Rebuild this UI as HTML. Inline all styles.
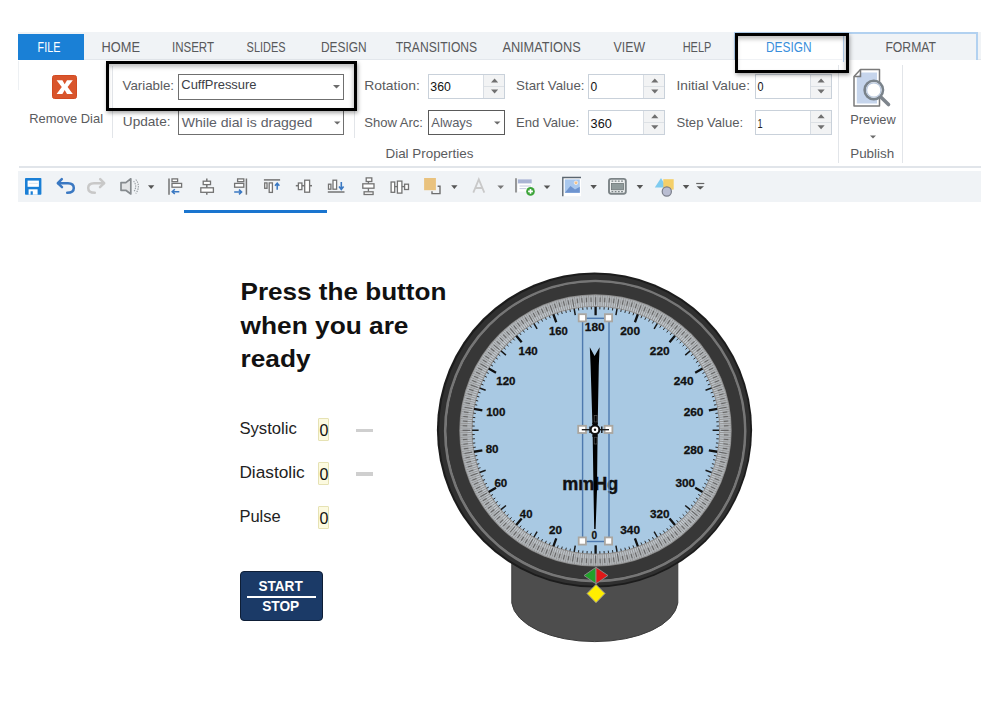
<!DOCTYPE html>
<html><head><meta charset="utf-8">
<style>
*{margin:0;padding:0;box-sizing:border-box}
html,body{width:999px;height:712px;overflow:hidden;background:#fff;font-family:"Liberation Sans",sans-serif;}
.a{position:absolute}
.inp{position:absolute;background:#fff;border:1px solid #6f6f6f}
.spin{position:absolute;background:#fff;border:1px solid #c9d1da}
.spin .sb{position:absolute;right:0;top:0;bottom:0;width:21px;background:#f2f3f4;border-left:1px solid #d8dde3}
.spin .sb:before{content:"";position:absolute;left:0;right:0;top:11px;height:1px;background:#dde1e5}
.sep{position:absolute;width:1px;background:#e2e5e9}
</style></head><body>
<!-- tab bar -->
<div class="a" style="left:18px;top:32px;width:963px;height:28px;background:#f0f3f6;border-bottom:1px solid #e3e7ec"></div>
<div class="a" style="left:17.8px;top:34px;width:66.2px;height:25.8px;background:#1a80d6"></div>
<!-- contextual tabs -->
<div class="a" style="left:734px;top:32px;width:243.5px;height:28px;border:2px solid #b2d1f0;border-bottom:none;background:#f0f3f6"></div>
<div class="a" style="left:735.5px;top:33.5px;width:108px;height:28px;background:#fff;border-right:1.5px solid #b4d0ef"></div>

<!-- ribbon bottom line -->
<div class="a" style="left:18px;top:61px;width:1px;height:29px;background:#edf0f3"></div>
<div class="a" style="left:736px;top:59.3px;width:106px;height:1px;background:#f0f2f5"></div>
<div class="a" style="left:19px;top:166.3px;width:962px;height:1.4px;background:#e1e5ea"></div>

<!-- remove dial -->
<div class="a" style="left:52.3px;top:74.8px;width:24.6px;height:24.6px;background:#d9552c;border:1px solid #d24a22;border-radius:2.5px"></div>
<svg class="a" style="left:0;top:0" width="100" height="110"><path d="M56.6 80.3 L62.4 80.3 L64.7 84.2 L67 80.3 L72.8 80.3 L67.6 87.1 L72.8 93.9 L67 93.9 L64.7 90 L62.4 93.9 L56.6 93.9 L61.8 87.1 Z" fill="#fff"/></svg>
<div class="sep" style="left:112px;top:66px;height:72px"></div>

<!-- variable / update -->
<div class="inp" style="left:178px;top:73.5px;width:166px;height:26px"></div>
<div class="inp" style="left:178px;top:109.5px;width:166px;height:25px"></div>
<div class="sep" style="left:354px;top:66px;height:72px"></div>

<!-- rotation / show arc -->
<div class="spin" style="left:428px;top:73.8px;width:77px;height:25.5px"><div class="sb"></div></div>
<div class="inp" style="left:428px;top:109.5px;width:77px;height:25.5px;border-color:#5a5a5a"></div>

<div class="spin" style="left:588px;top:73.8px;width:77px;height:25.5px"><div class="sb"></div></div>
<div class="spin" style="left:588px;top:109.6px;width:77px;height:25.2px"><div class="sb"></div></div>

<div class="spin" style="left:754.6px;top:73.8px;width:77px;height:25.2px"><div class="sb"></div></div>
<div class="spin" style="left:754.6px;top:109.6px;width:77px;height:25.2px"><div class="sb"></div></div>
<svg class="a" style="left:0;top:0" width="999" height="170">
<path d="M491.0 82.4 h7.2 l-3.6 -4z M491.0 89.4 h7.2 l-3.6 4z M651.2 82.4 h7.2 l-3.6 -4z M651.2 89.4 h7.2 l-3.6 4z M651.2 118.2 h7.2 l-3.6 -4z M651.2 125.2 h7.2 l-3.6 4z M817.5 82.4 h7.2 l-3.6 -4z M817.5 89.4 h7.2 l-3.6 4z M817.5 118.2 h7.2 l-3.6 -4z M817.5 125.2 h7.2 l-3.6 4z" fill="#707070"/>
<path d="M870 135.6 h6 l-3 3z" fill="#6b6b6b"/>
</svg>
<svg class="a" style="left:0;top:0" width="999" height="170">
<path d="M333 85 h7 l-3.5 3.5z M334 121.5 h6.5 l-3.25 3z M494 121.5 h6.5 l-3.25 3z" fill="#6b6b6b"/>
</svg>
<div class="sep" style="left:838px;top:65px;height:98px"></div>

<!-- preview icon -->
<svg class="a" style="left:0;top:0" width="999" height="170">
<path d="M860.5 69.5 H879.5 V106 H854 V76.5 Z" fill="#fff" stroke="#7a7a7a" stroke-width="1.5" stroke-linejoin="round"/>
<path d="M856.8 77.5 L861.5 72.5 H877 V103.5 H856.8 Z" fill="#c6d5ec"/>
<path d="M854 76.5 H860.5 V69.5" fill="none" stroke="#7a7a7a" stroke-width="1.5"/>
<path d="M880.8 97 L888.5 104.5" stroke="#7e858c" stroke-width="3.6" stroke-linecap="round"/>
<circle cx="873.8" cy="90" r="9.2" fill="#fff" stroke="#7a838b" stroke-width="2.6"/>
<circle cx="873.8" cy="90" r="7.2" fill="none" stroke="#b7c6dc" stroke-width="1.2"/>
</svg>
<div class="sep" style="left:902px;top:65px;height:98px"></div>

<!-- toolbar -->
<div class="a" style="left:17.5px;top:171px;width:963.5px;height:31px;background:#f0f3f6"></div>
<svg class="a" style="left:0;top:0" width="999" height="210">
<!-- save -->
<rect x="25" y="178" width="16.4" height="16.7" rx="0.8" fill="#1a7fd6"/>
<rect x="27.6" y="180.6" width="11.3" height="6.2" fill="#fff"/>
<rect x="28.8" y="182.8" width="9" height="1" fill="#d8e3ee"/>
<rect x="28.6" y="189.3" width="9" height="5.4" fill="#fff"/>
<rect x="30.6" y="191.3" width="2.2" height="3.4" fill="#1a7fd6"/>
<!-- undo -->
<path d="M58.2 183.2 H68 C72.3 183.2 73.8 185.6 73.8 188 C73.8 190.8 71.8 192.8 67.2 192.8" fill="none" stroke="#3a78c2" stroke-width="2.5" stroke-linecap="round"/>
<path d="M61.8 179.2 L57.8 183.2 L62 187.2" fill="none" stroke="#3a78c2" stroke-width="2.5" stroke-linecap="round" stroke-linejoin="round"/>
<!-- redo -->
<path d="M103.8 183.2 H94 C89.7 183.2 88.2 185.6 88.2 188 C88.2 190.8 90.2 192.8 94.8 192.8" fill="none" stroke="#c8c8c8" stroke-width="2.5" stroke-linecap="round"/>
<path d="M100.2 179.2 L104.2 183.2 L100 187.2" fill="none" stroke="#c8c8c8" stroke-width="2.5" stroke-linecap="round" stroke-linejoin="round"/>
<!-- speaker -->
<path d="M121 182.6 H125.8 L130.8 178.8 V194 L125.8 190.3 H121 Z" fill="#e2e4e6" stroke="#858a8e" stroke-width="1.7" stroke-linejoin="round"/>
<path d="M133.6 181 Q137.8 186.4 133.6 192 M135.8 179.5 Q141 186.4 135.8 193.5" fill="none" stroke="#9aa0a5" stroke-width="1.2" stroke-dasharray="1.4 1"/>
<path d="M148 185.3 h6.3 l-3.15 3.6z" fill="#555"/>
<!-- align left -->
<path d="M169 178.5 V194.7" stroke="#737373" stroke-width="1.5"/>
<rect x="172" y="178.9" width="5.6" height="2.8" fill="#fff" stroke="#737373" stroke-width="1.3"/>
<rect x="172" y="183.4" width="9.6" height="3.8" fill="#fff" stroke="#737373" stroke-width="1.3"/>
<path d="M179.3 191.7 H172.5 M174.8 189.3 L172.2 191.7 L174.8 194" fill="none" stroke="#3a78c2" stroke-width="1.5"/>
<!-- align center -->
<path d="M206.8 178.5 V194.7" stroke="#737373" stroke-width="1.5"/>
<rect x="203.2" y="181.2" width="7.3" height="3.4" fill="#fff" stroke="#737373" stroke-width="1.3"/>
<rect x="200.8" y="187.8" width="12.6" height="4.5" fill="#fff" stroke="#737373" stroke-width="1.3"/>
<!-- align right -->
<path d="M246.4 178.5 V194.7" stroke="#737373" stroke-width="1.5"/>
<rect x="237.6" y="178.9" width="6.2" height="2.8" fill="#fff" stroke="#737373" stroke-width="1.3"/>
<rect x="234.6" y="183.4" width="9.2" height="3.8" fill="#fff" stroke="#737373" stroke-width="1.3"/>
<path d="M234.2 192 H241.5 M239 189.6 L241.6 192 L239 194.4" fill="none" stroke="#3a78c2" stroke-width="1.5"/>
<!-- align top -->
<path d="M263.9 179.9 H280.1" stroke="#737373" stroke-width="1.5"/>
<rect x="264.7" y="182.9" width="2.3" height="5.4" fill="#fff" stroke="#737373" stroke-width="1.3"/>
<rect x="269.2" y="182.9" width="3.2" height="9.5" fill="#fff" stroke="#737373" stroke-width="1.3"/>
<path d="M277.2 189.8 V183.6 M275 185.8 L277.2 183.2 L279.4 185.8" fill="none" stroke="#3a78c2" stroke-width="1.5"/>
<!-- align middle -->
<path d="M295.8 185.7 H312" stroke="#737373" stroke-width="1.5"/>
<rect x="298.4" y="183" width="3.5" height="6.6" fill="#fff" stroke="#737373" stroke-width="1.3"/>
<rect x="304.7" y="180.2" width="4.9" height="12" fill="#fff" stroke="#737373" stroke-width="1.3"/>
<!-- align bottom -->
<path d="M327.8 192 H344.5" stroke="#737373" stroke-width="1.5"/>
<rect x="328.5" y="184.2" width="2.4" height="5" fill="#fff" stroke="#737373" stroke-width="1.3"/>
<rect x="333" y="180.2" width="3.6" height="9" fill="#fff" stroke="#737373" stroke-width="1.3"/>
<path d="M341.3 182.1 V189 M339 186.6 L341.3 189.4 L343.6 186.6" fill="none" stroke="#3a78c2" stroke-width="1.6"/>
<!-- distribute vertical -->
<path d="M368.4 181.7 V191.6" stroke="#737373" stroke-width="1.3"/>
<rect x="366.2" y="177.9" width="5.6" height="3.6" fill="#fff" stroke="#737373" stroke-width="1.3"/>
<rect x="362.8" y="183.8" width="11.2" height="4.4" fill="#fff" stroke="#737373" stroke-width="1.3"/>
<rect x="364.1" y="191.8" width="9" height="2.7" fill="#fff" stroke="#737373" stroke-width="1.3"/>
<!-- distribute horizontal -->
<path d="M394.9 186.6 H404.3" stroke="#737373" stroke-width="1.3"/>
<rect x="391.1" y="182" width="3.6" height="10.3" fill="#fff" stroke="#737373" stroke-width="1.3"/>
<rect x="397.4" y="181.1" width="4.5" height="12" fill="#fff" stroke="#737373" stroke-width="1.3"/>
<rect x="404.6" y="184.2" width="3.9" height="5.3" fill="#fff" stroke="#737373" stroke-width="1.3"/>
<!-- fill color -->
<rect x="424.1" y="178" width="11.8" height="12.2" fill="#e9c27e"/>
<path d="M437.6 186.3 H440 V193.6 H432 V191.2" fill="none" stroke="#6e6e6e" stroke-width="1.4"/>
<path d="M451.2 185.3 h6.3 l-3.15 3.6z" fill="#555"/>
<!-- A -->
<path d="M473.3 192.6 L478.8 179.4 L484.3 192.6 M475.3 188 H482.3" fill="none" stroke="#c9c9c9" stroke-width="1.8"/>
<path d="M497.4 185.4 h6.6 l-3.3 3.6z" fill="#777"/>
<!-- insert -->
<path d="M516 178.2 V192.6" stroke="#7a7a7a" stroke-width="1.5"/>
<rect x="517.9" y="179.4" width="13.8" height="4.2" fill="#a9b4d4"/>
<rect x="517.9" y="183.6" width="13.8" height="8" fill="#fff"/>
<path d="M519.5 186 H531 M519.5 188.6 H526" stroke="#c4cbe0" stroke-width="1"/>
<circle cx="530.5" cy="191.4" r="4.3" fill="#3da43a"/>
<path d="M530.5 189 V193.8 M528.1 191.4 H532.9" stroke="#fff" stroke-width="1.6"/>
<path d="M543.7 185.4 h6.6 l-3.3 3.6z" fill="#555"/>
<!-- image -->
<rect x="562.5" y="177.2" width="18.5" height="19" fill="#fff"/>
<path d="M562.8 196.2 V177.5 H581" fill="none" stroke="#5b6670" stroke-width="1.4"/>
<rect x="564.8" y="179.4" width="15" height="13.4" fill="#a9c8ee"/>
<path d="M564.8 192.8 L570.5 186 L575 189.5 L579.8 186.8 V192.8 Z" fill="#6e94cf"/>
<circle cx="576" cy="182.8" r="1.8" fill="#f3c28a" stroke="#fff" stroke-width="0.6"/>
<path d="M590.4 185 h6.5 l-3.25 3.9z" fill="#555"/>
<!-- film -->
<rect x="609" y="178.9" width="16.8" height="14.9" rx="2.2" fill="#eef0f1" stroke="#7b8386" stroke-width="1.9"/>
<rect x="611.4" y="183.4" width="12" height="6.4" fill="#8f9a9b" stroke="#6f7779" stroke-width="0.8"/>
<path d="M611.5 181.1 H623.5 M611.5 191.7 H623.5" stroke="#7b8386" stroke-width="1.3" stroke-dasharray="1.8 1.4"/>
<path d="M636.6 185 h6.5 l-3.25 3.9z" fill="#555"/>
<!-- shapes -->
<path d="M654.8 187.6 L661 177.9 L666.5 187.6 Z" fill="#7fcbef"/>
<rect x="663.3" y="179.2" width="10.4" height="10.4" fill="#f4cf69"/>
<circle cx="666.8" cy="191.5" r="4.6" fill="#b9bdd2" stroke="#7a7e8a" stroke-width="1.2"/>
<path d="M682.8 185 h6.5 l-3.25 3.9z" fill="#555"/>
<path d="M696.2 183.5 H704.3" stroke="#666" stroke-width="1.2"/>
<path d="M696.6 186.2 h7.4 l-3.7 3.4z" fill="#555"/>
</svg>

<div class="a" style="left:184px;top:210.3px;width:143px;height:2.7px;background:#1a75cf"></div>

<!-- left content shapes -->
<div class="a" style="left:318px;top:418px;width:11px;height:23px;background:#fcfae0;border:1px solid #e6e2b4;border-radius:1px"></div>
<div class="a" style="left:318px;top:462px;width:11px;height:23px;background:#fcfae0;border:1px solid #e6e2b4;border-radius:1px"></div>
<div class="a" style="left:318px;top:506px;width:11px;height:23px;background:#fcfae0;border:1px solid #e6e2b4;border-radius:1px"></div>
<div class="a" style="left:356.4px;top:428.5px;width:16.5px;height:3.3px;background:#cfcfcf"></div>
<div class="a" style="left:356.4px;top:472.3px;width:16.5px;height:3.3px;background:#cfcfcf"></div>
<div class="a" style="left:239.7px;top:570.8px;width:83.3px;height:49.8px;background:#1b3a67;border:1px solid #0e1e36;border-radius:4px"></div>
<div class="a" style="left:247px;top:595.5px;width:69px;height:2px;background:#fff"></div>

<svg class="a" style="left:0;top:0" width="999" height="712"><path d="M511.8 560 L511.8 603 A83.2 41.5 0 0 0 677.8 603 L677.8 560" fill="#4d4d4d" stroke="#3c3c3c" stroke-width="1"/>
<circle cx="594.5" cy="430" r="157.6" fill="#1c1c1c"/>
<circle cx="594.7" cy="430.2" r="155.6" fill="#303030"/>
<circle cx="595.2" cy="431.1" r="149.9" fill="none" stroke="#767676" stroke-width="2.8"/>
<circle cx="595.3" cy="430.8" r="148.6" fill="#373737"/>
<circle cx="595.5" cy="430.4" r="136.2" fill="#8c8c8c"/>
<circle cx="595.5" cy="430.4" r="135.2" fill="#bfc6cc"/>
<path d="M595.60 306.95L595.60 294.95M597.75 306.97L597.96 294.97M599.91 307.03L600.33 295.03M602.06 307.12L602.69 295.14M604.21 307.25L605.05 295.28M606.36 307.42L607.40 295.47M608.50 307.63L609.75 295.69M610.64 307.87L612.10 295.96M612.77 308.15L614.44 296.27M614.90 308.47L616.78 296.62M617.03 308.82L619.11 297.01M619.15 309.22L621.44 297.44M621.26 309.65L623.75 297.91M623.36 310.11L626.06 298.42M625.45 310.62L628.36 298.97M627.54 311.15L630.64 299.56M629.61 311.73L632.92 300.20M631.68 312.34L635.19 300.87M633.73 312.99L637.44 301.58M635.78 313.67L639.68 302.33M637.81 314.39L641.91 303.12M639.82 315.15L644.12 303.94M641.83 315.94L646.32 304.81M643.82 316.76L648.50 305.71M645.79 317.62L650.67 306.66M647.75 318.51L652.82 307.64M649.69 319.44L654.96 308.65M651.62 320.40L657.07 309.71M653.53 321.39L659.17 310.80M655.43 322.42L661.24 311.93M657.30 323.48L663.30 313.09M659.16 324.58L665.34 314.29M660.99 325.70L667.35 315.52M662.81 326.86L669.34 316.79M664.60 328.05L671.31 318.10M666.38 329.27L673.26 319.44M668.13 330.52L675.19 320.81M669.86 331.80L677.09 322.21M671.57 333.11L678.96 323.65M673.26 334.45L680.81 325.12M674.92 335.82L682.63 326.63M676.56 337.22L684.43 328.16M678.17 338.65L686.20 329.73M679.76 340.10L687.94 331.32M681.32 341.58L689.66 332.95M682.86 343.09L691.34 334.61M684.37 344.63L693.00 336.29M685.85 346.19L694.63 338.01M687.30 347.78L696.22 339.75M688.73 349.39L697.79 341.52M690.13 351.03L699.32 343.32M691.50 352.69L700.83 345.14M692.84 354.38L702.30 346.99M694.15 356.09L703.74 348.86M695.43 357.82L705.14 350.76M696.68 359.57L706.51 352.69M697.90 361.35L707.85 354.64M699.09 363.14L709.16 356.61M700.25 364.96L710.43 358.60M701.37 366.79L711.66 360.61M702.47 368.65L712.86 362.65M703.53 370.52L714.02 364.71M704.56 372.42L715.15 366.78M705.55 374.33L716.24 368.88M706.51 376.26L717.30 370.99M707.44 378.20L718.31 373.13M708.33 380.16L719.29 375.28M709.19 382.13L720.24 377.45M710.01 384.12L721.14 379.63M710.80 386.13L722.01 381.83M711.56 388.14L722.83 384.04M712.28 390.17L723.62 386.27M712.96 392.22L724.37 388.51M713.61 394.27L725.08 390.76M714.22 396.34L725.75 393.03M714.80 398.41L726.39 395.31M715.33 400.50L726.98 397.59M715.84 402.59L727.53 399.89M716.30 404.69L728.04 402.20M716.73 406.80L728.51 404.51M717.13 408.92L728.94 406.84M717.48 411.05L729.33 409.17M717.80 413.18L729.68 411.51M718.08 415.31L729.99 413.85M718.32 417.45L730.26 416.20M718.53 419.59L730.48 418.55M718.70 421.74L730.67 420.90M718.83 423.89L730.81 423.26M718.92 426.04L730.92 425.62M718.98 428.20L730.98 427.99M719.00 430.35L731.00 430.35M718.98 432.50L730.98 432.71M718.92 434.66L730.92 435.08M718.83 436.81L730.81 437.44M718.70 438.96L730.67 439.80M718.53 441.11L730.48 442.15M718.32 443.25L730.26 444.50M718.08 445.39L729.99 446.85M717.80 447.52L729.68 449.19M717.48 449.65L729.33 451.53M717.13 451.78L728.94 453.86M716.73 453.90L728.51 456.19M716.30 456.01L728.04 458.50M715.84 458.11L727.53 460.81M715.33 460.20L726.98 463.11M714.80 462.29L726.39 465.39M714.22 464.36L725.75 467.67M713.61 466.43L725.08 469.94M712.96 468.48L724.37 472.19M712.28 470.53L723.62 474.43M711.56 472.56L722.83 476.66M710.80 474.57L722.01 478.87M710.01 476.58L721.14 481.07M709.19 478.57L720.24 483.25M708.33 480.54L719.29 485.42M707.44 482.50L718.31 487.57M706.51 484.44L717.30 489.71M705.55 486.37L716.24 491.82M704.56 488.28L715.15 493.92M703.53 490.18L714.02 495.99M702.47 492.05L712.86 498.05M701.37 493.91L711.66 500.09M700.25 495.74L710.43 502.10M699.09 497.56L709.16 504.09M697.90 499.35L707.85 506.06M696.68 501.13L706.51 508.01M695.43 502.88L705.14 509.94M694.15 504.61L703.74 511.84M692.84 506.32L702.30 513.71M691.50 508.01L700.83 515.56M690.13 509.67L699.32 517.38M688.73 511.31L697.79 519.18M687.30 512.92L696.22 520.95M685.85 514.51L694.63 522.69M684.37 516.07L693.00 524.41M682.86 517.61L691.34 526.09M681.32 519.12L689.66 527.75M679.76 520.60L687.94 529.38M678.17 522.05L686.20 530.97M676.56 523.48L684.43 532.54M674.92 524.88L682.63 534.07M673.26 526.25L680.81 535.58M671.57 527.59L678.96 537.05M669.86 528.90L677.09 538.49M668.13 530.18L675.19 539.89M666.38 531.43L673.26 541.26M664.60 532.65L671.31 542.60M662.81 533.84L669.34 543.91M660.99 535.00L667.35 545.18M659.16 536.12L665.34 546.41M657.30 537.22L663.30 547.61M655.43 538.28L661.24 548.77M653.53 539.31L659.17 549.90M651.62 540.30L657.07 550.99M649.69 541.26L654.96 552.05M647.75 542.19L652.82 553.06M645.79 543.08L650.67 554.04M643.82 543.94L648.50 554.99M641.83 544.76L646.32 555.89M639.82 545.55L644.12 556.76M637.81 546.31L641.91 557.58M635.78 547.03L639.68 558.37M633.73 547.71L637.44 559.12M631.68 548.36L635.19 559.83M629.61 548.97L632.92 560.50M627.54 549.55L630.64 561.14M625.45 550.08L628.36 561.73M623.36 550.59L626.06 562.28M621.26 551.05L623.75 562.79M619.15 551.48L621.44 563.26M617.03 551.88L619.11 563.69M614.90 552.23L616.78 564.08M612.77 552.55L614.44 564.43M610.64 552.83L612.10 564.74M608.50 553.07L609.75 565.01M606.36 553.28L607.40 565.23M604.21 553.45L605.05 565.42M602.06 553.58L602.69 565.56M599.91 553.67L600.33 565.67M597.75 553.73L597.96 565.73M595.60 553.75L595.60 565.75M593.45 553.73L593.24 565.73M591.29 553.67L590.87 565.67M589.14 553.58L588.51 565.56M586.99 553.45L586.15 565.42M584.84 553.28L583.80 565.23M582.70 553.07L581.45 565.01M580.56 552.83L579.10 564.74M578.43 552.55L576.76 564.43M576.30 552.23L574.42 564.08M574.17 551.88L572.09 563.69M572.05 551.48L569.76 563.26M569.94 551.05L567.45 562.79M567.84 550.59L565.14 562.28M565.75 550.08L562.84 561.73M563.66 549.55L560.56 561.14M561.59 548.97L558.28 560.50M559.52 548.36L556.01 559.83M557.47 547.71L553.76 559.12M555.42 547.03L551.52 558.37M553.39 546.31L549.29 557.58M551.38 545.55L547.08 556.76M549.37 544.76L544.88 555.89M547.38 543.94L542.70 554.99M545.41 543.08L540.53 554.04M543.45 542.19L538.38 553.06M541.51 541.26L536.24 552.05M539.58 540.30L534.13 550.99M537.67 539.31L532.03 549.90M535.77 538.28L529.96 548.77M533.90 537.22L527.90 547.61M532.04 536.12L525.86 546.41M530.21 535.00L523.85 545.18M528.39 533.84L521.86 543.91M526.60 532.65L519.89 542.60M524.82 531.43L517.94 541.26M523.07 530.18L516.01 539.89M521.34 528.90L514.11 538.49M519.63 527.59L512.24 537.05M517.94 526.25L510.39 535.58M516.28 524.88L508.57 534.07M514.64 523.48L506.77 532.54M513.03 522.05L505.00 530.97M511.44 520.60L503.26 529.38M509.88 519.12L501.54 527.75M508.34 517.61L499.86 526.09M506.83 516.07L498.20 524.41M505.35 514.51L496.57 522.69M503.90 512.92L494.98 520.95M502.47 511.31L493.41 519.18M501.07 509.67L491.88 517.38M499.70 508.01L490.37 515.56M498.36 506.32L488.90 513.71M497.05 504.61L487.46 511.84M495.77 502.88L486.06 509.94M494.52 501.13L484.69 508.01M493.30 499.35L483.35 506.06M492.11 497.56L482.04 504.09M490.95 495.74L480.77 502.10M489.83 493.91L479.54 500.09M488.73 492.05L478.34 498.05M487.67 490.18L477.18 495.99M486.64 488.28L476.05 493.92M485.65 486.37L474.96 491.82M484.69 484.44L473.90 489.71M483.76 482.50L472.89 487.57M482.87 480.54L471.91 485.42M482.01 478.57L470.96 483.25M481.19 476.58L470.06 481.07M480.40 474.57L469.19 478.87M479.64 472.56L468.37 476.66M478.92 470.53L467.58 474.43M478.24 468.48L466.83 472.19M477.59 466.43L466.12 469.94M476.98 464.36L465.45 467.67M476.40 462.29L464.81 465.39M475.87 460.20L464.22 463.11M475.36 458.11L463.67 460.81M474.90 456.01L463.16 458.50M474.47 453.90L462.69 456.19M474.07 451.78L462.26 453.86M473.72 449.65L461.87 451.53M473.40 447.52L461.52 449.19M473.12 445.39L461.21 446.85M472.88 443.25L460.94 444.50M472.67 441.11L460.72 442.15M472.50 438.96L460.53 439.80M472.37 436.81L460.39 437.44M472.28 434.66L460.28 435.08M472.22 432.50L460.22 432.71M472.20 430.35L460.20 430.35M472.22 428.20L460.22 427.99M472.28 426.04L460.28 425.62M472.37 423.89L460.39 423.26M472.50 421.74L460.53 420.90M472.67 419.59L460.72 418.55M472.88 417.45L460.94 416.20M473.12 415.31L461.21 413.85M473.40 413.18L461.52 411.51M473.72 411.05L461.87 409.17M474.07 408.92L462.26 406.84M474.47 406.80L462.69 404.51M474.90 404.69L463.16 402.20M475.36 402.59L463.67 399.89M475.87 400.50L464.22 397.59M476.40 398.41L464.81 395.31M476.98 396.34L465.45 393.03M477.59 394.27L466.12 390.76M478.24 392.22L466.83 388.51M478.92 390.17L467.58 386.27M479.64 388.14L468.37 384.04M480.40 386.13L469.19 381.83M481.19 384.12L470.06 379.63M482.01 382.13L470.96 377.45M482.87 380.16L471.91 375.28M483.76 378.20L472.89 373.13M484.69 376.26L473.90 370.99M485.65 374.33L474.96 368.88M486.64 372.42L476.05 366.78M487.67 370.52L477.18 364.71M488.73 368.65L478.34 362.65M489.83 366.79L479.54 360.61M490.95 364.96L480.77 358.60M492.11 363.14L482.04 356.61M493.30 361.35L483.35 354.64M494.52 359.57L484.69 352.69M495.77 357.82L486.06 350.76M497.05 356.09L487.46 348.86M498.36 354.38L488.90 346.99M499.70 352.69L490.37 345.14M501.07 351.03L491.88 343.32M502.47 349.39L493.41 341.52M503.90 347.78L494.98 339.75M505.35 346.19L496.57 338.01M506.83 344.63L498.20 336.29M508.34 343.09L499.86 334.61M509.88 341.58L501.54 332.95M511.44 340.10L503.26 331.32M513.03 338.65L505.00 329.73M514.64 337.22L506.77 328.16M516.28 335.82L508.57 326.63M517.94 334.45L510.39 325.12M519.63 333.11L512.24 323.65M521.34 331.80L514.11 322.21M523.07 330.52L516.01 320.81M524.82 329.27L517.94 319.44M526.60 328.05L519.89 318.10M528.39 326.86L521.86 316.79M530.21 325.70L523.85 315.52M532.04 324.58L525.86 314.29M533.90 323.48L527.90 313.09M535.77 322.42L529.96 311.93M537.67 321.39L532.03 310.80M539.58 320.40L534.13 309.71M541.51 319.44L536.24 308.65M543.45 318.51L538.38 307.64M545.41 317.62L540.53 306.66M547.38 316.76L542.70 305.71M549.37 315.94L544.88 304.81M551.38 315.15L547.08 303.94M553.39 314.39L549.29 303.12M555.42 313.67L551.52 302.33M557.47 312.99L553.76 301.58M559.52 312.34L556.01 300.87M561.59 311.73L558.28 300.20M563.66 311.15L560.56 299.56M565.75 310.62L562.84 298.97M567.84 310.11L565.14 298.42M569.94 309.65L567.45 297.91M572.05 309.22L569.76 297.44M574.17 308.82L572.09 297.01M576.30 308.47L574.42 296.62M578.43 308.15L576.76 296.27M580.56 307.87L579.10 295.96M582.70 307.63L581.45 295.69M584.84 307.42L583.80 295.47M586.99 307.25L586.15 295.28M589.14 307.12L588.51 295.14M591.29 307.03L590.87 295.03M593.45 306.97L593.24 294.97" stroke="#8e8e8e" stroke-width="0.9"/>
<path d="M596.72 302.35L596.78 294.96M598.95 302.39L599.14 295.00M601.18 302.47L601.51 295.08M603.41 302.59L603.87 295.20M605.64 302.74L606.22 295.37M607.87 302.94L608.58 295.57M610.09 303.17L610.93 295.82M612.31 303.45L613.27 296.11M614.52 303.76L615.61 296.44M616.73 304.11L617.95 296.81M618.93 304.49L620.27 297.22M621.12 304.92L622.59 297.67M623.30 305.38L624.91 298.16M625.48 305.89L627.21 298.69M627.65 306.43L629.50 299.26M629.81 307.01L631.78 299.87M631.95 307.62L634.06 300.53M634.09 308.27L636.32 301.22M636.21 308.96L638.56 301.95M638.33 309.69L640.80 302.72M640.43 310.46L643.02 303.52M642.51 311.26L645.22 304.37M644.58 312.09L647.42 305.26M646.64 312.97L649.59 306.18M648.68 313.87L651.75 307.14M650.71 314.82L653.89 308.14M652.71 315.80L656.02 309.18M654.70 316.81L658.12 310.25M656.68 317.86L660.21 311.36M658.63 318.94L662.27 312.50M660.56 320.06L664.32 313.69M662.48 321.21L666.35 314.90M664.37 322.40L668.35 316.15M666.25 323.61L670.33 317.44M668.10 324.86L672.29 318.76M669.93 326.14L674.23 320.12M671.74 327.46L676.14 321.51M673.52 328.80L678.03 322.93M675.28 330.18L679.89 324.38M677.02 331.58L681.72 325.87M678.73 333.02L683.54 327.39M680.42 334.48L685.32 328.94M682.08 335.98L687.07 330.52M683.71 337.50L688.80 332.13M685.32 339.05L690.50 333.78M686.90 340.63L692.17 335.45M688.45 342.24L693.82 337.15M689.97 343.87L695.43 338.88M691.47 345.53L697.01 340.63M692.93 347.22L698.56 342.41M694.37 348.93L700.08 344.23M695.77 350.67L701.57 346.06M697.15 352.43L703.02 347.92M698.49 354.21L704.44 349.81M699.81 356.02L705.83 351.72M701.09 357.85L707.19 353.66M702.34 359.70L708.51 355.62M703.55 361.58L709.80 357.60M704.74 363.47L711.05 359.60M705.89 365.39L712.26 361.63M707.01 367.32L713.45 363.68M708.09 369.27L714.59 365.74M709.14 371.25L715.70 367.83M710.15 373.24L716.77 369.93M711.13 375.24L717.81 372.06M712.08 377.27L718.81 374.20M712.98 379.31L719.77 376.36M713.86 381.37L720.69 378.53M714.69 383.44L721.58 380.73M715.49 385.52L722.43 382.93M716.26 387.62L723.23 385.15M716.99 389.74L724.00 387.39M717.68 391.86L724.73 389.63M718.33 394.00L725.42 391.89M718.94 396.14L726.08 394.17M719.52 398.30L726.69 396.45M720.06 400.47L727.26 398.74M720.57 402.65L727.79 401.04M721.03 404.83L728.28 403.36M721.46 407.02L728.73 405.68M721.84 409.22L729.14 408.00M722.19 411.43L729.51 410.34M722.50 413.64L729.84 412.68M722.78 415.86L730.13 415.02M723.01 418.08L730.38 417.37M723.21 420.31L730.58 419.73M723.36 422.54L730.75 422.08M723.48 424.77L730.87 424.44M723.56 427.00L730.95 426.81M723.60 429.23L730.99 429.17M723.60 431.47L730.99 431.53M723.56 433.70L730.95 433.89M723.48 435.93L730.87 436.26M723.36 438.16L730.75 438.62M723.21 440.39L730.58 440.97M723.01 442.62L730.38 443.33M722.78 444.84L730.13 445.68M722.50 447.06L729.84 448.02M722.19 449.27L729.51 450.36M721.84 451.48L729.14 452.70M721.46 453.68L728.73 455.02M721.03 455.87L728.28 457.34M720.57 458.05L727.79 459.66M720.06 460.23L727.26 461.96M719.52 462.40L726.69 464.25M718.94 464.56L726.08 466.53M718.33 466.70L725.42 468.81M717.68 468.84L724.73 471.07M716.99 470.96L724.00 473.31M716.26 473.08L723.23 475.55M715.49 475.18L722.43 477.77M714.69 477.26L721.58 479.97M713.86 479.33L720.69 482.17M712.98 481.39L719.77 484.34M712.08 483.43L718.81 486.50M711.13 485.46L717.81 488.64M710.15 487.46L716.77 490.77M709.14 489.45L715.70 492.87M708.09 491.43L714.59 494.96M707.01 493.38L713.45 497.02M705.89 495.31L712.26 499.07M704.74 497.23L711.05 501.10M703.55 499.12L709.80 503.10M702.34 501.00L708.51 505.08M701.09 502.85L707.19 507.04M699.81 504.68L705.83 508.98M698.49 506.49L704.44 510.89M697.15 508.27L703.02 512.78M695.77 510.03L701.57 514.64M694.37 511.77L700.08 516.47M692.93 513.48L698.56 518.29M691.47 515.17L697.01 520.07M689.97 516.83L695.43 521.82M688.45 518.46L693.82 523.55M686.90 520.07L692.17 525.25M685.32 521.65L690.50 526.92M683.71 523.20L688.80 528.57M682.08 524.72L687.07 530.18M680.42 526.22L685.32 531.76M678.73 527.68L683.54 533.31M677.02 529.12L681.72 534.83M675.28 530.52L679.89 536.32M673.52 531.90L678.03 537.77M671.74 533.24L676.14 539.19M669.93 534.56L674.23 540.58M668.10 535.84L672.29 541.94M666.25 537.09L670.33 543.26M664.37 538.30L668.35 544.55M662.48 539.49L666.35 545.80M660.56 540.64L664.32 547.01M658.63 541.76L662.27 548.20M656.68 542.84L660.21 549.34M654.70 543.89L658.12 550.45M652.71 544.90L656.02 551.52M650.71 545.88L653.89 552.56M648.68 546.83L651.75 553.56M646.64 547.73L649.59 554.52M644.58 548.61L647.42 555.44M642.51 549.44L645.22 556.33M640.43 550.24L643.02 557.18M638.33 551.01L640.80 557.98M636.21 551.74L638.56 558.75M634.09 552.43L636.32 559.48M631.95 553.08L634.06 560.17M629.81 553.69L631.78 560.83M627.65 554.27L629.50 561.44M625.48 554.81L627.21 562.01M623.30 555.32L624.91 562.54M621.12 555.78L622.59 563.03M618.93 556.21L620.27 563.48M616.73 556.59L617.95 563.89M614.52 556.94L615.61 564.26M612.31 557.25L613.27 564.59M610.09 557.53L610.93 564.88M607.87 557.76L608.58 565.13M605.64 557.96L606.22 565.33M603.41 558.11L603.87 565.50M601.18 558.23L601.51 565.62M598.95 558.31L599.14 565.70M596.72 558.35L596.78 565.74M594.48 558.35L594.42 565.74M592.25 558.31L592.06 565.70M590.02 558.23L589.69 565.62M587.79 558.11L587.33 565.50M585.56 557.96L584.98 565.33M583.33 557.76L582.62 565.13M581.11 557.53L580.27 564.88M578.89 557.25L577.93 564.59M576.68 556.94L575.59 564.26M574.47 556.59L573.25 563.89M572.27 556.21L570.93 563.48M570.08 555.78L568.61 563.03M567.90 555.32L566.29 562.54M565.72 554.81L563.99 562.01M563.55 554.27L561.70 561.44M561.39 553.69L559.42 560.83M559.25 553.08L557.14 560.17M557.11 552.43L554.88 559.48M554.99 551.74L552.64 558.75M552.87 551.01L550.40 557.98M550.77 550.24L548.18 557.18M548.69 549.44L545.98 556.33M546.62 548.61L543.78 555.44M544.56 547.73L541.61 554.52M542.52 546.83L539.45 553.56M540.49 545.88L537.31 552.56M538.49 544.90L535.18 551.52M536.50 543.89L533.08 550.45M534.52 542.84L530.99 549.34M532.57 541.76L528.93 548.20M530.64 540.64L526.88 547.01M528.72 539.49L524.85 545.80M526.83 538.30L522.85 544.55M524.95 537.09L520.87 543.26M523.10 535.84L518.91 541.94M521.27 534.56L516.97 540.58M519.46 533.24L515.06 539.19M517.68 531.90L513.17 537.77M515.92 530.52L511.31 536.32M514.18 529.12L509.48 534.83M512.47 527.68L507.66 533.31M510.78 526.22L505.88 531.76M509.12 524.72L504.13 530.18M507.49 523.20L502.40 528.57M505.88 521.65L500.70 526.92M504.30 520.07L499.03 525.25M502.75 518.46L497.38 523.55M501.23 516.83L495.77 521.82M499.73 515.17L494.19 520.07M498.27 513.48L492.64 518.29M496.83 511.77L491.12 516.47M495.43 510.03L489.63 514.64M494.05 508.27L488.18 512.78M492.71 506.49L486.76 510.89M491.39 504.68L485.37 508.98M490.11 502.85L484.01 507.04M488.86 501.00L482.69 505.08M487.65 499.12L481.40 503.10M486.46 497.23L480.15 501.10M485.31 495.31L478.94 499.07M484.19 493.38L477.75 497.02M483.11 491.43L476.61 494.96M482.06 489.45L475.50 492.87M481.05 487.46L474.43 490.77M480.07 485.46L473.39 488.64M479.12 483.43L472.39 486.50M478.22 481.39L471.43 484.34M477.34 479.33L470.51 482.17M476.51 477.26L469.62 479.97M475.71 475.18L468.77 477.77M474.94 473.08L467.97 475.55M474.21 470.96L467.20 473.31M473.52 468.84L466.47 471.07M472.87 466.70L465.78 468.81M472.26 464.56L465.12 466.53M471.68 462.40L464.51 464.25M471.14 460.23L463.94 461.96M470.63 458.05L463.41 459.66M470.17 455.87L462.92 457.34M469.74 453.68L462.47 455.02M469.36 451.48L462.06 452.70M469.01 449.27L461.69 450.36M468.70 447.06L461.36 448.02M468.42 444.84L461.07 445.68M468.19 442.62L460.82 443.33M467.99 440.39L460.62 440.97M467.84 438.16L460.45 438.62M467.72 435.93L460.33 436.26M467.64 433.70L460.25 433.89M467.60 431.47L460.21 431.53M467.60 429.23L460.21 429.17M467.64 427.00L460.25 426.81M467.72 424.77L460.33 424.44M467.84 422.54L460.45 422.08M467.99 420.31L460.62 419.73M468.19 418.08L460.82 417.37M468.42 415.86L461.07 415.02M468.70 413.64L461.36 412.68M469.01 411.43L461.69 410.34M469.36 409.22L462.06 408.00M469.74 407.02L462.47 405.68M470.17 404.83L462.92 403.36M470.63 402.65L463.41 401.04M471.14 400.47L463.94 398.74M471.68 398.30L464.51 396.45M472.26 396.14L465.12 394.17M472.87 394.00L465.78 391.89M473.52 391.86L466.47 389.63M474.21 389.74L467.20 387.39M474.94 387.62L467.97 385.15M475.71 385.52L468.77 382.93M476.51 383.44L469.62 380.73M477.34 381.37L470.51 378.53M478.22 379.31L471.43 376.36M479.12 377.27L472.39 374.20M480.07 375.24L473.39 372.06M481.05 373.24L474.43 369.93M482.06 371.25L475.50 367.83M483.11 369.27L476.61 365.74M484.19 367.32L477.75 363.68M485.31 365.39L478.94 361.63M486.46 363.47L480.15 359.60M487.65 361.58L481.40 357.60M488.86 359.70L482.69 355.62M490.11 357.85L484.01 353.66M491.39 356.02L485.37 351.72M492.71 354.21L486.76 349.81M494.05 352.43L488.18 347.92M495.43 350.67L489.63 346.06M496.83 348.93L491.12 344.23M498.27 347.22L492.64 342.41M499.73 345.53L494.19 340.63M501.23 343.87L495.77 338.88M502.75 342.24L497.38 337.15M504.30 340.63L499.03 335.45M505.88 339.05L500.70 333.78M507.49 337.50L502.40 332.13M509.12 335.98L504.13 330.52M510.78 334.48L505.88 328.94M512.47 333.02L507.66 327.39M514.18 331.58L509.48 325.87M515.92 330.18L511.31 324.38M517.68 328.80L513.17 322.93M519.46 327.46L515.06 321.51M521.27 326.14L516.97 320.12M523.10 324.86L518.91 318.76M524.95 323.61L520.87 317.44M526.83 322.40L522.85 316.15M528.72 321.21L524.85 314.90M530.64 320.06L526.88 313.69M532.57 318.94L528.93 312.50M534.52 317.86L530.99 311.36M536.50 316.81L533.08 310.25M538.49 315.80L535.18 309.18M540.49 314.82L537.31 308.14M542.52 313.87L539.45 307.14M544.56 312.97L541.61 306.18M546.62 312.09L543.78 305.26M548.69 311.26L545.98 304.37M550.77 310.46L548.18 303.52M552.87 309.69L550.40 302.72M554.99 308.96L552.64 301.95M557.11 308.27L554.88 301.22M559.25 307.62L557.14 300.53M561.39 307.01L559.42 299.87M563.55 306.43L561.70 299.26M565.72 305.89L563.99 298.69M567.90 305.38L566.29 298.16M570.08 304.92L568.61 297.67M572.27 304.49L570.93 297.22M574.47 304.11L573.25 296.81M576.68 303.76L575.59 296.44M578.89 303.45L577.93 296.11M581.11 303.17L580.27 295.82M583.33 302.94L582.62 295.57M585.56 302.74L584.98 295.37M587.79 302.59L587.33 295.20M590.02 302.47L589.69 295.08M592.25 302.39L592.06 295.00M594.48 302.35L594.42 294.96" stroke="#a0a0a0" stroke-width="0.6"/>
<path d="M595.60 555.85L595.60 563.35M591.12 558.77L590.96 563.27M586.64 558.54L586.32 563.03M582.17 558.15L581.70 562.62M577.72 557.60L577.09 562.06M573.81 553.94L572.50 561.33M568.88 556.04L567.95 560.44M564.51 555.03L563.42 559.40M560.18 553.87L558.94 558.20M555.89 552.56L554.50 556.84M552.68 548.28L550.11 555.33M547.46 549.49L545.78 553.67M543.33 547.74L541.50 551.85M539.27 545.85L537.30 549.89M535.27 543.81L533.16 547.78M532.85 539.04L529.10 545.53M527.51 539.32L525.12 543.14M523.74 536.88L521.23 540.61M520.07 534.31L517.42 537.95M516.49 531.61L513.72 535.16M514.93 526.49L510.11 532.23M509.62 525.84L506.61 529.19M506.34 522.79L503.21 526.02M503.16 519.61L499.93 522.74M500.11 516.33L496.76 519.34M499.46 511.02L493.72 515.84M494.34 509.46L490.79 512.23M491.64 505.88L488.00 508.53M489.07 502.21L485.34 504.72M486.63 498.44L482.81 500.83M486.91 493.10L480.42 496.85M482.14 490.68L478.17 492.79M480.10 486.68L476.06 488.65M478.21 482.62L474.10 484.45M476.46 478.49L472.28 480.17M477.67 473.27L470.62 475.84M473.39 470.06L469.11 471.45M472.08 465.77L467.75 467.01M470.92 461.44L466.55 462.53M469.91 457.07L465.51 458.00M472.01 452.14L464.62 453.45M468.35 448.23L463.89 448.86M467.80 443.78L463.33 444.25M467.41 439.31L462.92 439.63M467.18 434.83L462.68 434.99M470.10 430.35L462.60 430.35M467.18 425.87L462.68 425.71M467.41 421.39L462.92 421.07M467.80 416.92L463.33 416.45M468.35 412.47L463.89 411.84M472.01 408.56L464.62 407.25M469.91 403.63L465.51 402.70M470.92 399.26L466.55 398.17M472.08 394.93L467.75 393.69M473.39 390.64L469.11 389.25M477.67 387.43L470.62 384.86M476.46 382.21L472.28 380.53M478.21 378.08L474.10 376.25M480.10 374.02L476.06 372.05M482.14 370.02L478.17 367.91M486.91 367.60L480.42 363.85M486.63 362.26L482.81 359.87M489.07 358.49L485.34 355.98M491.64 354.82L488.00 352.17M494.34 351.24L490.79 348.47M499.46 349.68L493.72 344.86M500.11 344.37L496.76 341.36M503.16 341.09L499.93 337.96M506.34 337.91L503.21 334.68M509.62 334.86L506.61 331.51M514.93 334.21L510.11 328.47M516.49 329.09L513.72 325.54M520.07 326.39L517.42 322.75M523.74 323.82L521.23 320.09M527.51 321.38L525.12 317.56M532.85 321.66L529.10 315.17M535.27 316.89L533.16 312.92M539.27 314.85L537.30 310.81M543.33 312.96L541.50 308.85M547.46 311.21L545.78 307.03M552.68 312.42L550.11 305.37M555.89 308.14L554.50 303.86M560.18 306.83L558.94 302.50M564.51 305.67L563.42 301.30M568.88 304.66L567.95 300.26M573.81 306.76L572.50 299.37M577.72 303.10L577.09 298.64M582.17 302.55L581.70 298.08M586.64 302.16L586.32 297.67M591.12 301.93L590.96 297.43M595.60 304.85L595.60 297.35M600.08 301.93L600.24 297.43M604.56 302.16L604.88 297.67M609.03 302.55L609.50 298.08M613.48 303.10L614.11 298.64M617.39 306.76L618.70 299.37M622.32 304.66L623.25 300.26M626.69 305.67L627.78 301.30M631.02 306.83L632.26 302.50M635.31 308.14L636.70 303.86M638.52 312.42L641.09 305.37M643.74 311.21L645.42 307.03M647.87 312.96L649.70 308.85M651.93 314.85L653.90 310.81M655.93 316.89L658.04 312.92M658.35 321.66L662.10 315.17M663.69 321.38L666.08 317.56M667.46 323.82L669.97 320.09M671.13 326.39L673.78 322.75M674.71 329.09L677.48 325.54M676.27 334.21L681.09 328.47M681.58 334.86L684.59 331.51M684.86 337.91L687.99 334.68M688.04 341.09L691.27 337.96M691.09 344.37L694.44 341.36M691.74 349.68L697.48 344.86M696.86 351.24L700.41 348.47M699.56 354.82L703.20 352.17M702.13 358.49L705.86 355.98M704.57 362.26L708.39 359.87M704.29 367.60L710.78 363.85M709.06 370.02L713.03 367.91M711.10 374.02L715.14 372.05M712.99 378.08L717.10 376.25M714.74 382.21L718.92 380.53M713.53 387.43L720.58 384.86M717.81 390.64L722.09 389.25M719.12 394.93L723.45 393.69M720.28 399.26L724.65 398.17M721.29 403.63L725.69 402.70M719.19 408.56L726.58 407.25M722.85 412.47L727.31 411.84M723.40 416.92L727.87 416.45M723.79 421.39L728.28 421.07M724.02 425.87L728.52 425.71M721.10 430.35L728.60 430.35M724.02 434.83L728.52 434.99M723.79 439.31L728.28 439.63M723.40 443.78L727.87 444.25M722.85 448.23L727.31 448.86M719.19 452.14L726.58 453.45M721.29 457.07L725.69 458.00M720.28 461.44L724.65 462.53M719.12 465.77L723.45 467.01M717.81 470.06L722.09 471.45M713.53 473.27L720.58 475.84M714.74 478.49L718.92 480.17M712.99 482.62L717.10 484.45M711.10 486.68L715.14 488.65M709.06 490.68L713.03 492.79M704.29 493.10L710.78 496.85M704.57 498.44L708.39 500.83M702.13 502.21L705.86 504.72M699.56 505.88L703.20 508.53M696.86 509.46L700.41 512.23M691.74 511.02L697.48 515.84M691.09 516.33L694.44 519.34M688.04 519.61L691.27 522.74M684.86 522.79L687.99 526.02M681.58 525.84L684.59 529.19M676.27 526.49L681.09 532.23M674.71 531.61L677.48 535.16M671.13 534.31L673.78 537.95M667.46 536.88L669.97 540.61M663.69 539.32L666.08 543.14M658.35 539.04L662.10 545.53M655.93 543.81L658.04 547.78M651.93 545.85L653.90 549.89M647.87 547.74L649.70 551.85M643.74 549.49L645.42 553.67M638.52 548.28L641.09 555.33M635.31 552.56L636.70 556.84M631.02 553.87L632.26 558.20M626.69 555.03L627.78 559.40M622.32 556.04L623.25 560.44M617.39 553.94L618.70 561.33M613.48 557.60L614.11 562.06M609.03 558.15L609.50 562.62M604.56 558.54L604.88 563.03M600.08 558.77L600.24 563.27" stroke="#5a5a5a" stroke-width="1.1" opacity="0.8"/>
<circle cx="595.8" cy="430.3" r="123.8" fill="none" stroke="#949494" stroke-width="1.2"/>
<circle cx="595.9" cy="430.3" r="123.2" fill="#a9c9e3"/>
<path d="M595.60 545.30L595.60 553.80M556.27 538.36L553.36 546.35M521.68 518.40L516.22 524.91M496.01 487.80L488.65 492.05M482.35 450.27L473.98 451.75M482.35 410.33L473.98 408.85M496.01 372.80L488.65 368.55M521.68 342.20L516.22 335.69M556.27 322.24L553.36 314.25M595.60 315.30L595.60 306.80M634.93 322.24L637.84 314.25M669.52 342.20L674.98 335.69M695.19 372.80L702.55 368.55M708.85 410.33L717.22 408.85M708.85 450.27L717.22 451.75M695.19 487.80L702.55 492.05M669.52 518.40L674.98 524.91M634.93 538.36L637.84 546.35" stroke="#111" stroke-width="2.3"/>
<path d="M575.28 545.52L574.15 551.92M537.10 531.62L533.85 537.25M505.97 505.51L500.99 509.68M485.66 470.32L479.55 472.54M478.60 430.30L472.10 430.30M485.66 390.28L479.55 388.06M505.97 355.09L500.99 350.92M537.10 328.98L533.85 323.35M575.28 315.08L574.15 308.68M615.92 315.08L617.05 308.68M654.10 328.98L657.35 323.35M685.23 355.09L690.21 350.92M705.54 390.28L711.65 388.06M712.60 430.30L719.10 430.30M705.54 470.32L711.65 472.54M685.23 505.51L690.21 509.68M654.10 531.62L657.35 537.25M615.92 545.52L617.05 551.92" stroke="#1a1a1a" stroke-width="1.5"/>
<path d="M591.38 551.23L591.29 553.72M587.16 551.01L586.99 553.50M582.95 550.64L582.69 553.12M578.76 550.12L578.41 552.60M570.44 548.66L569.92 551.10M566.33 547.71L565.72 550.13M562.25 546.61L561.56 549.02M558.21 545.38L557.44 547.76M550.27 542.49L549.34 544.81M546.38 540.84L545.37 543.12M542.56 539.05L541.46 541.30M538.79 537.14L537.62 539.34M531.48 532.91L530.15 535.03M527.94 530.61L526.54 532.69M524.48 528.19L523.01 530.21M521.10 525.65L519.57 527.62M514.64 520.22L512.96 522.08M511.55 517.34L509.81 519.14M508.56 514.35L506.76 516.09M505.68 511.26L503.82 512.94M500.25 504.80L498.28 506.33M497.71 501.42L495.69 502.89M495.29 497.96L493.21 499.36M492.99 494.42L490.87 495.75M488.76 487.11L486.56 488.28M486.85 483.34L484.60 484.44M485.06 479.52L482.78 480.53M483.41 475.63L481.09 476.56M480.52 467.69L478.14 468.46M479.29 463.65L476.88 464.34M478.19 459.57L475.77 460.18M477.24 455.46L474.80 455.98M475.78 447.14L473.30 447.49M475.26 442.95L472.78 443.21M474.89 438.74L472.40 438.91M474.67 434.52L472.18 434.61M474.67 426.08L472.18 425.99M474.89 421.86L472.40 421.69M475.26 417.65L472.78 417.39M475.78 413.46L473.30 413.11M477.24 405.14L474.80 404.62M478.19 401.03L475.77 400.42M479.29 396.95L476.88 396.26M480.52 392.91L478.14 392.14M483.41 384.97L481.09 384.04M485.06 381.08L482.78 380.07M486.85 377.26L484.60 376.16M488.76 373.49L486.56 372.32M492.99 366.18L490.87 364.85M495.29 362.64L493.21 361.24M497.71 359.18L495.69 357.71M500.25 355.80L498.28 354.27M505.68 349.34L503.82 347.66M508.56 346.25L506.76 344.51M511.55 343.26L509.81 341.46M514.64 340.38L512.96 338.52M521.10 334.95L519.57 332.98M524.48 332.41L523.01 330.39M527.94 329.99L526.54 327.91M531.48 327.69L530.15 325.57M538.79 323.46L537.62 321.26M542.56 321.55L541.46 319.30M546.38 319.76L545.37 317.48M550.27 318.11L549.34 315.79M558.21 315.22L557.44 312.84M562.25 313.99L561.56 311.58M566.33 312.89L565.72 310.47M570.44 311.94L569.92 309.50M578.76 310.48L578.41 308.00M582.95 309.96L582.69 307.48M587.16 309.59L586.99 307.10M591.38 309.37L591.29 306.88M599.82 309.37L599.91 306.88M604.04 309.59L604.21 307.10M608.25 309.96L608.51 307.48M612.44 310.48L612.79 308.00M620.76 311.94L621.28 309.50M624.87 312.89L625.48 310.47M628.95 313.99L629.64 311.58M632.99 315.22L633.76 312.84M640.93 318.11L641.86 315.79M644.82 319.76L645.83 317.48M648.64 321.55L649.74 319.30M652.41 323.46L653.58 321.26M659.72 327.69L661.05 325.57M663.26 329.99L664.66 327.91M666.72 332.41L668.19 330.39M670.10 334.95L671.63 332.98M676.56 340.38L678.24 338.52M679.65 343.26L681.39 341.46M682.64 346.25L684.44 344.51M685.52 349.34L687.38 347.66M690.95 355.80L692.92 354.27M693.49 359.18L695.51 357.71M695.91 362.64L697.99 361.24M698.21 366.18L700.33 364.85M702.44 373.49L704.64 372.32M704.35 377.26L706.60 376.16M706.14 381.08L708.42 380.07M707.79 384.97L710.11 384.04M710.68 392.91L713.06 392.14M711.91 396.95L714.32 396.26M713.01 401.03L715.43 400.42M713.96 405.14L716.40 404.62M715.42 413.46L717.90 413.11M715.94 417.65L718.42 417.39M716.31 421.86L718.80 421.69M716.53 426.08L719.02 425.99M716.53 434.52L719.02 434.61M716.31 438.74L718.80 438.91M715.94 442.95L718.42 443.21M715.42 447.14L717.90 447.49M713.96 455.46L716.40 455.98M713.01 459.57L715.43 460.18M711.91 463.65L714.32 464.34M710.68 467.69L713.06 468.46M707.79 475.63L710.11 476.56M706.14 479.52L708.42 480.53M704.35 483.34L706.60 484.44M702.44 487.11L704.64 488.28M698.21 494.42L700.33 495.75M695.91 497.96L697.99 499.36M693.49 501.42L695.51 502.89M690.95 504.80L692.92 506.33M685.52 511.26L687.38 512.94M682.64 514.35L684.44 516.09M679.65 517.34L681.39 519.14M676.56 520.22L678.24 522.08M670.10 525.65L671.63 527.62M666.72 528.19L668.19 530.21M663.26 530.61L664.66 532.69M659.72 532.91L661.05 535.03M652.41 537.14L653.58 539.34M648.64 539.05L649.74 541.30M644.82 540.84L645.83 543.12M640.93 542.49L641.86 544.81M632.99 545.38L633.76 547.76M628.95 546.61L629.64 549.02M624.87 547.71L625.48 550.13M620.76 548.66L621.28 551.10M612.44 550.12L612.79 552.60M608.25 550.64L608.51 553.12M604.04 551.01L604.21 553.50M599.82 551.23L599.91 553.72" stroke="#2a2a2a" stroke-width="1.0"/>
<g font-family="Liberation Sans"><text x="591.55" y="538.85" font-size="11.8" font-weight="bold" fill="#111" textLength="5.60" lengthAdjust="spacingAndGlyphs" stroke="#111" stroke-width="0.3">0</text>
<text x="549.05" y="533.95" font-size="11.8" font-weight="bold" fill="#111" textLength="13.00" lengthAdjust="spacingAndGlyphs" stroke="#111" stroke-width="0.3">20</text>
<text x="519.85" y="518.05" font-size="11.8" font-weight="bold" fill="#111" textLength="12.60" lengthAdjust="spacingAndGlyphs" stroke="#111" stroke-width="0.3">40</text>
<text x="494.45" y="486.95" font-size="11.8" font-weight="bold" fill="#111" textLength="12.80" lengthAdjust="spacingAndGlyphs" stroke="#111" stroke-width="0.3">60</text>
<text x="485.65" y="453.25" font-size="11.8" font-weight="bold" fill="#111" textLength="12.90" lengthAdjust="spacingAndGlyphs" stroke="#111" stroke-width="0.3">80</text>
<text x="486.15" y="416.35" font-size="11.8" font-weight="bold" fill="#111" textLength="19.31" lengthAdjust="spacingAndGlyphs" stroke="#111" stroke-width="0.3">100</text>
<text x="496.25" y="385.25" font-size="11.8" font-weight="bold" fill="#111" textLength="19.21" lengthAdjust="spacingAndGlyphs" stroke="#111" stroke-width="0.3">120</text>
<text x="518.55" y="354.65" font-size="11.8" font-weight="bold" fill="#111" textLength="19.21" lengthAdjust="spacingAndGlyphs" stroke="#111" stroke-width="0.3">140</text>
<text x="549.05" y="335.45" font-size="11.8" font-weight="bold" fill="#111" textLength="18.81" lengthAdjust="spacingAndGlyphs" stroke="#111" stroke-width="0.3">160</text>
<text x="584.85" y="331.15" font-size="11.8" font-weight="bold" fill="#111" textLength="19.81" lengthAdjust="spacingAndGlyphs" stroke="#111" stroke-width="0.3">180</text>
<text x="620.25" y="335.45" font-size="11.8" font-weight="bold" fill="#111" textLength="19.81" lengthAdjust="spacingAndGlyphs" stroke="#111" stroke-width="0.3">200</text>
<text x="649.85" y="354.65" font-size="11.8" font-weight="bold" fill="#111" textLength="19.81" lengthAdjust="spacingAndGlyphs" stroke="#111" stroke-width="0.3">220</text>
<text x="673.75" y="385.25" font-size="11.8" font-weight="bold" fill="#111" textLength="19.81" lengthAdjust="spacingAndGlyphs" stroke="#111" stroke-width="0.3">240</text>
<text x="683.65" y="416.35" font-size="11.8" font-weight="bold" fill="#111" textLength="19.81" lengthAdjust="spacingAndGlyphs" stroke="#111" stroke-width="0.3">260</text>
<text x="683.65" y="453.55" font-size="11.8" font-weight="bold" fill="#111" textLength="19.81" lengthAdjust="spacingAndGlyphs" stroke="#111" stroke-width="0.3">280</text>
<text x="675.45" y="486.95" font-size="11.8" font-weight="bold" fill="#111" textLength="19.71" lengthAdjust="spacingAndGlyphs" stroke="#111" stroke-width="0.3">300</text>
<text x="650.05" y="518.05" font-size="11.8" font-weight="bold" fill="#111" textLength="19.61" lengthAdjust="spacingAndGlyphs" stroke="#111" stroke-width="0.3">320</text>
<text x="620.25" y="533.55" font-size="11.8" font-weight="bold" fill="#111" textLength="19.81" lengthAdjust="spacingAndGlyphs" stroke="#111" stroke-width="0.3">340</text>
<text x="562.20" y="490.20" font-size="18.4" font-weight="bold" fill="#111" textLength="56.11" lengthAdjust="spacingAndGlyphs" stroke="#111" stroke-width="0.4">mmHg</text></g>
<path d="M589.8 347.2 L594.6 356 L599.6 347.2 L598.8 366 L597.6 430 L597 490 L595.6 529 L594.2 529 L593.5 490 L592.6 430 L590.6 366 Z" fill="#000"/>
<rect x="582.6" y="318.3" width="26.4" height="223.2" fill="none" stroke="#4e79ae" stroke-width="1.4"/>
<rect x="578.7" y="314.2" width="7.2" height="7.2" fill="#fff" stroke="#aaa6a0" stroke-width="1.8"/>
<rect x="604.9" y="314.2" width="7.2" height="7.2" fill="#fff" stroke="#aaa6a0" stroke-width="1.8"/>
<rect x="578.7" y="537.4" width="7.2" height="7.2" fill="#fff" stroke="#aaa6a0" stroke-width="1.8"/>
<rect x="604.9" y="537.4" width="7.2" height="7.2" fill="#fff" stroke="#aaa6a0" stroke-width="1.8"/>
<rect x="578.2" y="425.8" width="7.8" height="7.2" fill="#fff" stroke="#aaa69f" stroke-width="1.8"/>
<rect x="604.6" y="425.8" width="7.8" height="7.2" fill="#fff" stroke="#aaa69f" stroke-width="1.8"/>
<path d="M581.8 429.7 H609" stroke="#111" stroke-width="1.3"/>
<path d="M590 426.5 V433 M601.8 426.5 V433" stroke="#111" stroke-width="1.4"/>
<rect x="594.2" y="415.5" width="2.8" height="6.5" fill="none" stroke="#555" stroke-width="0.7"/>
<rect x="594.2" y="437.2" width="2.8" height="6.8" fill="none" stroke="#555" stroke-width="0.7"/>
<path d="M592 423.3 H598 M592 436 H598" stroke="#111" stroke-width="1"/>
<circle cx="595" cy="429.7" r="4.3" fill="#fff" stroke="#111" stroke-width="2"/>
<circle cx="595" cy="429.7" r="1.2" fill="#111"/>
<path d="M584 575.5 L596 567.3 L596 583.8 Z" fill="#22a02a" stroke="#888" stroke-width="1"/>
<path d="M608 575.5 L596 567.3 L596 583.8 Z" fill="#e01818" stroke="#888" stroke-width="1"/>
<path d="M587 593.5 L596 584.5 L605 593.5 L596 602.7 Z" fill="#ffee00" stroke="#999" stroke-width="1"/></svg>
<svg class="a" style="left:0;top:0" width="999" height="712" font-family="Liberation Sans"><text x="37.60" y="52.20" font-size="14" font-weight="normal" fill="#ffffff" textLength="22.80" lengthAdjust="spacingAndGlyphs">FILE</text>
<text x="101.60" y="52.30" font-size="14" font-weight="normal" fill="#58595b" textLength="38.40" lengthAdjust="spacingAndGlyphs">HOME</text>
<text x="172.00" y="52.30" font-size="14" font-weight="normal" fill="#58595b" textLength="42.00" lengthAdjust="spacingAndGlyphs">INSERT</text>
<text x="246.60" y="52.30" font-size="14" font-weight="normal" fill="#58595b" textLength="38.90" lengthAdjust="spacingAndGlyphs">SLIDES</text>
<text x="321.00" y="52.10" font-size="14" font-weight="normal" fill="#58595b" textLength="45.70" lengthAdjust="spacingAndGlyphs">DESIGN</text>
<text x="395.70" y="52.10" font-size="14" font-weight="normal" fill="#58595b" textLength="81.50" lengthAdjust="spacingAndGlyphs">TRANSITIONS</text>
<text x="502.40" y="52.10" font-size="14" font-weight="normal" fill="#58595b" textLength="78.31" lengthAdjust="spacingAndGlyphs">ANIMATIONS</text>
<text x="613.60" y="52.10" font-size="14" font-weight="normal" fill="#58595b" textLength="31.50" lengthAdjust="spacingAndGlyphs">VIEW</text>
<text x="682.70" y="52.10" font-size="14" font-weight="normal" fill="#58595b" textLength="28.70" lengthAdjust="spacingAndGlyphs">HELP</text>
<text x="766.00" y="52.00" font-size="14" font-weight="normal" fill="#3a8fdc" textLength="45.60" lengthAdjust="spacingAndGlyphs">DESIGN</text>
<text x="885.40" y="52.00" font-size="14" font-weight="normal" fill="#58595b" textLength="50.61" lengthAdjust="spacingAndGlyphs">FORMAT</text>
<text x="29.30" y="123.20" font-size="13" font-weight="normal" fill="#5a5b5e" textLength="73.70" lengthAdjust="spacingAndGlyphs">Remove Dial</text>
<text x="122.50" y="89.50" font-size="13" font-weight="normal" fill="#5a5b5e" textLength="51.49" lengthAdjust="spacingAndGlyphs">Variable:</text>
<text x="181.30" y="88.70" font-size="13" font-weight="normal" fill="#3c4047" textLength="75.21" lengthAdjust="spacingAndGlyphs">CuffPressure</text>
<text x="122.80" y="126.40" font-size="13" font-weight="normal" fill="#5a5b5e" textLength="47.71" lengthAdjust="spacingAndGlyphs">Update:</text>
<text x="181.70" y="127.00" font-size="13" font-weight="normal" fill="#5c6068" textLength="130.60" lengthAdjust="spacingAndGlyphs">While dial is dragged</text>
<text x="364.20" y="90.00" font-size="13" font-weight="normal" fill="#5a5b5e" textLength="55.61" lengthAdjust="spacingAndGlyphs">Rotation:</text>
<text x="430.30" y="90.80" font-size="12.3" font-weight="normal" fill="#111" textLength="20.51" lengthAdjust="spacingAndGlyphs">360</text>
<text x="364.20" y="127.00" font-size="13" font-weight="normal" fill="#5a5b5e" textLength="58.80" lengthAdjust="spacingAndGlyphs">Show Arc:</text>
<text x="431.30" y="127.00" font-size="13" font-weight="normal" fill="#5c6068" textLength="40.99" lengthAdjust="spacingAndGlyphs">Always</text>
<text x="385.50" y="157.60" font-size="13" font-weight="normal" fill="#5a5b5e" textLength="87.90" lengthAdjust="spacingAndGlyphs">Dial Properties</text>
<text x="516.10" y="89.90" font-size="13" font-weight="normal" fill="#5a5b5e" textLength="68.40" lengthAdjust="spacingAndGlyphs">Start Value:</text>
<text x="590.60" y="90.80" font-size="12.3" font-weight="normal" fill="#111" textLength="6.70" lengthAdjust="spacingAndGlyphs">0</text>
<text x="516.10" y="127.30" font-size="13" font-weight="normal" fill="#5a5b5e" textLength="63.11" lengthAdjust="spacingAndGlyphs">End Value:</text>
<text x="590.60" y="127.80" font-size="12.3" font-weight="normal" fill="#111" textLength="21.11" lengthAdjust="spacingAndGlyphs">360</text>
<text x="676.50" y="89.90" font-size="13" font-weight="normal" fill="#5a5b5e" textLength="73.49" lengthAdjust="spacingAndGlyphs">Initial Value:</text>
<text x="757.60" y="90.80" font-size="12.3" font-weight="normal" fill="#111" textLength="6.00" lengthAdjust="spacingAndGlyphs">0</text>
<text x="676.50" y="127.30" font-size="13" font-weight="normal" fill="#5a5b5e" textLength="66.70" lengthAdjust="spacingAndGlyphs">Step Value:</text>
<text x="757.60" y="127.80" font-size="12.3" font-weight="normal" fill="#222" textLength="5.10" lengthAdjust="spacingAndGlyphs">1</text>
<text x="850.20" y="123.50" font-size="13" font-weight="normal" fill="#5a5b5e" textLength="45.46" lengthAdjust="spacingAndGlyphs">Preview</text>
<text x="850.20" y="157.60" font-size="13" font-weight="normal" fill="#5a5b5e" textLength="44.00" lengthAdjust="spacingAndGlyphs">Publish</text>
<text x="240.50" y="299.70" font-size="23.7" font-weight="bold" fill="#111" textLength="205.89" lengthAdjust="spacingAndGlyphs">Press the button</text>
<text x="240.58" y="334.00" font-size="23.7" font-weight="bold" fill="#111" textLength="167.91" lengthAdjust="spacingAndGlyphs">when you are</text>
<text x="240.50" y="367.00" font-size="23.7" font-weight="bold" fill="#111" textLength="70.01" lengthAdjust="spacingAndGlyphs">ready</text>
<text x="239.40" y="433.80" font-size="16.8" font-weight="normal" fill="#222" textLength="57.41" lengthAdjust="spacingAndGlyphs">Systolic</text>
<text x="239.40" y="477.60" font-size="16.8" font-weight="normal" fill="#222" textLength="65.30" lengthAdjust="spacingAndGlyphs">Diastolic</text>
<text x="239.40" y="521.50" font-size="16.8" font-weight="normal" fill="#222" textLength="41.31" lengthAdjust="spacingAndGlyphs">Pulse</text>
<text x="319.40" y="436.40" font-size="16.5" font-weight="normal" fill="#111" textLength="8.90" lengthAdjust="spacingAndGlyphs">0</text>
<text x="319.40" y="480.40" font-size="16.5" font-weight="normal" fill="#111" textLength="8.90" lengthAdjust="spacingAndGlyphs">0</text>
<text x="319.40" y="524.40" font-size="16.5" font-weight="normal" fill="#111" textLength="8.90" lengthAdjust="spacingAndGlyphs">0</text>
<text x="258.40" y="591.00" font-size="15" font-weight="bold" fill="#fff" textLength="44.30" lengthAdjust="spacingAndGlyphs">START</text>
<text x="262.20" y="611.20" font-size="15" font-weight="bold" fill="#fff" textLength="36.99" lengthAdjust="spacingAndGlyphs">STOP</text></svg>

<!-- highlight boxes -->
<div class="a" style="left:105.5px;top:61.3px;width:251.5px;height:50px;border:3.2px solid #000;box-shadow:1px 2px 4px rgba(0,0,0,.35), inset -1px 3px 4px rgba(0,0,0,.25)"></div>
<div class="a" style="left:735px;top:32.6px;width:114px;height:40.6px;border:3.4px solid #000;box-shadow:1px 2px 4px rgba(0,0,0,.35), inset -1px 3px 4px rgba(0,0,0,.25)"></div>

</body></html>
